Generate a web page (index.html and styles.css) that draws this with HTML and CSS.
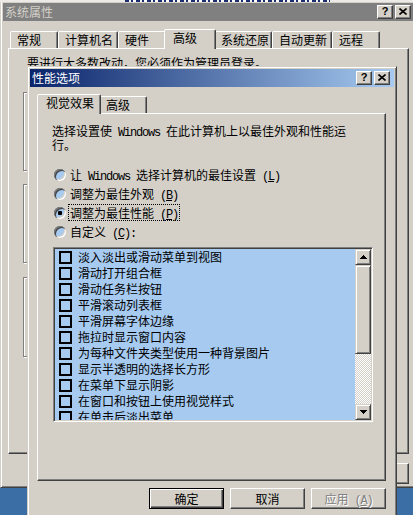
FILE: index.html
```html
<!DOCTYPE html>
<html lang="zh-CN">
<head>
<meta charset="utf-8">
<title>系统属性 - 性能选项</title>
<link rel="stylesheet" href="styles.css">
</head>
<body>
<div class="desktop">

  <div class="win win-back">
    <div class="titlebar titlebar-inactive">
      <span class="title">系统属性</span>
      <div class="caps">
        <span class="cap cap-help">?</span>
        <span class="cap"><svg width="8" height="7" viewBox="0 0 8 7"><path d="M0.5 0.5 L7.5 6.5 M7.5 0.5 L0.5 6.5" stroke="#000" stroke-width="1.6" fill="none"/></svg></span>
      </div>
    </div>
    <div class="body body-back">
      <div class="tabs">
        <div class="tab tab-2">常规</div>
        <div class="tab tab-4">计算机名</div>
        <div class="tab tab-2">硬件</div>
        <div class="tab tab-2 tab-sel tab-sel-2">高级</div>
        <div class="tab tab-4 tab-narrow">系统还原</div>
        <div class="tab tab-4">自动更新</div>
        <div class="tab tab-2">远程</div>
      </div>
      <div class="panel panel-back">
        <p class="note">要进行大多数改动，您必须作为管理员登录。</p>
        <div class="group group-1"></div>
        <div class="group group-2"></div>
        <div class="group group-3"></div>
      </div>
      <div class="btnrow">
        <button class="btn">确定</button>
        <button class="btn">取消</button>
        <button class="btn btn-disabled">应用<span class="mono"> (<u>A</u>)</span></button>
      </div>
    </div>
  </div>

  <div class="strip"><div class="strip-ink"></div></div>

  <div class="win win-front">
    <div class="titlebar titlebar-active">
      <span class="title">性能选项</span>
      <div class="caps">
        <span class="cap cap-help">?</span>
        <span class="cap"><svg width="8" height="7" viewBox="0 0 8 7"><path d="M0.5 0.5 L7.5 6.5 M7.5 0.5 L0.5 6.5" stroke="#000" stroke-width="1.6" fill="none"/></svg></span>
      </div>
    </div>
    <div class="body body-front">
      <div class="tabs">
        <div class="tab tab-4 tab-sel tab-sel-4">视觉效果</div>
        <div class="tab tab-2">高级</div>
      </div>
      <div class="panel panel-front">
        <p class="intro">选择设置使<span class="mono"> Windows </span>在此计算机上以最佳外观和性能运<br>行。</p>
        <div class="radios">
          <div class="radio-row"><span class="radio"></span><span class="rlabel">让<span class="mono"> Windows </span>选择计算机的最佳设置<span class="mono"> (<u>L</u>)</span></span></div>
          <div class="radio-row"><span class="radio"></span><span class="rlabel">调整为最佳外观<span class="mono"> (<u>B</u>)</span></span></div>
          <div class="radio-row"><span class="radio radio-on"></span><span class="rlabel rlabel-focus">调整为最佳性能<span class="mono"> (<u>P</u>)</span></span></div>
          <div class="radio-row"><span class="radio"></span><span class="rlabel">自定义<span class="mono"> (<u>C</u>):</span></span></div>
        </div>
        <div class="listbox">
          <div class="items">
            <div class="item"><span class="chk"></span>淡入淡出或滑动菜单到视图</div>
            <div class="item"><span class="chk"></span>滑动打开组合框</div>
            <div class="item"><span class="chk"></span>滑动任务栏按钮</div>
            <div class="item"><span class="chk"></span>平滑滚动列表框</div>
            <div class="item"><span class="chk"></span>平滑屏幕字体边缘</div>
            <div class="item"><span class="chk"></span>拖拉时显示窗口内容</div>
            <div class="item"><span class="chk"></span>为每种文件夹类型使用一种背景图片</div>
            <div class="item"><span class="chk"></span>显示半透明的选择长方形</div>
            <div class="item"><span class="chk"></span>在菜单下显示阴影</div>
            <div class="item"><span class="chk"></span>在窗口和按钮上使用视觉样式</div>
            <div class="item"><span class="chk"></span>在单击后淡出菜单</div>
          </div>
          <div class="sb">
            <div class="sb-btn"><svg width="7" height="4" viewBox="0 0 7 4" shape-rendering="crispEdges"><path d="M3 0h1v1h1v1h1v1h1v1H0V3h1V2h1V1h1z" fill="#000"/></svg></div>
            <div class="sb-thumb"></div>
            <div class="sb-track"></div>
            <div class="sb-btn"><svg width="7" height="4" viewBox="0 0 7 4" shape-rendering="crispEdges"><path d="M0 0h7v1H6v1H5v1H4v1H3V3H2V2H1V1H0z" fill="#000"/></svg></div>
          </div>
        </div>
      </div>
      <div class="btnrow">
        <button class="btn btn-default">确定</button>
        <button class="btn">取消</button>
        <button class="btn btn-disabled">应用<span class="mono"> (<u>A</u>)</span></button>
      </div>
    </div>
  </div>

</div>
</body>
</html>
```

FILE: styles.css
```css
* { box-sizing: border-box; }
html, body { margin: 0; padding: 0; }
body {
  background: #3a6ea5;
  font-family: "Noto Sans CJK SC", "Noto Sans", sans-serif;
  font-size: 12px;
  color: #000;
  overflow: hidden;
}
.desktop {
  position: relative;
  width: 413px;
  height: 515px;
  overflow: hidden;
}

/* windows */
.win {
  position: absolute;
  background: #d4d0c8;
  border: 1px solid;
  border-color: #d4d0c8 #404040 #404040 #d4d0c8;
  box-shadow: inset 1px 1px #fff, inset -1px -1px #808080;
  padding: 2px;
  display: flex;
  flex-direction: column;
}
.win-back { left: 0; top: 0; width: 418px; height: 488px; }
.win-front { left: 27px; top: 66px; width: 370px; height: 470px; }

.strip {
  position: absolute;
  left: 0; top: 0;
  width: 413px; height: 2px;
  background: #eceae6;
}
.strip-ink {
  margin-left: 125px;
  width: 205px;
  height: 2px;
  background: repeating-linear-gradient(90deg, #1c2c70 0 4px, #f4f4f4 4px 6px, #1c2c70 6px 8px, #fff 8px 11px);
}

.titlebar {
  height: 18px;
  flex: none;
  display: flex;
  align-items: center;
  padding: 0 4px 0 2px;
}
.titlebar-inactive { background: #808080; color: #d4d0c8; }
.titlebar-active { background: linear-gradient(90deg, #0a246a, #a6caf0); color: #fff; }
.title { flex: 1; line-height: 18px; white-space: nowrap; }
.caps { display: flex; gap: 2px; }
.cap {
  width: 16px; height: 14px;
  background: #d4d0c8;
  border: 1px solid;
  border-color: #fff #404040 #404040 #fff;
  box-shadow: inset -1px -1px #808080;
  display: flex; align-items: center; justify-content: center;
  padding-bottom: 1px;
}
.cap-help {
  font: bold 11px/11px "Liberation Sans", sans-serif;
  color: #000;
}

/* bodies */
.body { flex: 1; display: flex; flex-direction: column; }
.body-back { padding: 8px 0 0 5px; }
.body-front { padding: 7px 8px 0 7px; }

/* tabs */
.tabs {
  display: flex;
  align-items: flex-end;
  height: 19px;
  padding-left: 2px;
  flex: none;
}
.tab {
  height: 17px;
  background: #d4d0c8;
  border: 1px solid;
  border-bottom: 0;
  border-color: #fff #404040 transparent #fff;
  border-radius: 2px 2px 0 0;
  box-shadow: inset -1px 0 #808080;
  padding: 0 0 0 6px;
  line-height: 16px;
  white-space: nowrap;
  flex: none;
}
.tab-2 { width: 48px; }
.tab-4 { width: 60px; }
.tab-narrow { width: 58px; }
.tab-sel {
  height: 20px;
  margin: 0 -2px -1px;
  padding-left: 8px;
  position: relative;
  z-index: 2;
}
.tab-sel-2 { width: 52px; }
.tab-sel-4 { width: 64px; }

.panel {
  border: 1px solid;
  border-color: #fff #404040 #404040 #fff;
  box-shadow: inset -1px -1px #808080;
  flex: none;
}
.panel-back { width: 401px; height: 406px; padding: 7px 0 0 18px; }
.panel-front { height: 368px; padding: 10px 0 0 14px; }

/* back panel */
.note { margin: 0; line-height: 13px; white-space: nowrap; }
.group {
  width: 370px;
  height: 79px;
  margin-left: -4px;
  border: 1px solid #808080;
  box-shadow: inset 1px 1px #fff, 1px 1px #fff;
}
.group-1 { margin-top: 23px; }
.group-2 { margin-top: 13px; }
.group-3 { margin-top: 14px; height: 80px; }

/* front panel */
.mono {
  font-family: "Liberation Mono", monospace;
  letter-spacing: -1.2px;
  line-height: 0;
  white-space: pre;
}
.intro { margin: 0; line-height: 14px; white-space: nowrap; }
.radios { margin-top: 13px; }
.radio-row {
  height: 19px;
  display: flex;
  align-items: center;
  white-space: nowrap;
}
.radio {
  width: 12px; height: 12px;
  margin: 0 3px 0 2px;
  border-radius: 50%;
  background: #a6caf0;
  box-shadow: inset 1px 1px 0 #808080, inset 2px 2px 0 #404040, inset -1px -1px 0 #fff, inset -2px -2px 0 #d4d0c8;
  position: relative;
  flex: none;
}
.radio-on::after {
  content: "";
  position: absolute;
  left: 4px; top: 4px;
  width: 4px; height: 4px;
  border-radius: 1px;
  background: #000;
}
.rlabel { line-height: 15px; padding: 0 1px; }
.rlabel-focus { outline: 1px dotted #000; }

.listbox {
  margin: 6px 0 0 1px;
  width: 320px;
  height: 175px;
  padding: 1px;
  border: 1px solid;
  border-color: #808080 #fff #fff #808080;
  box-shadow: inset 1px 1px #404040, inset -1px -1px #d4d0c8;
  background: #a6caf0;
  display: flex;
}
.items { flex: 1; overflow: hidden; }
.item {
  height: 16px;
  display: flex;
  align-items: center;
  line-height: 16px;
  white-space: nowrap;
}
.chk {
  width: 13px; height: 13px;
  border: 2px solid #000;
  margin: 0 6px 0 4px;
  flex: none;
}
.sb { width: 16px; flex: none; display: flex; flex-direction: column; }
.sb-btn, .sb-thumb {
  background: #d4d0c8;
  border: 1px solid;
  border-color: #d4d0c8 #404040 #404040 #d4d0c8;
  box-shadow: inset 1px 1px #fff, inset -1px -1px #808080;
}
.sb-btn { height: 16px; display: flex; align-items: center; justify-content: center; flex: none; }
.sb-thumb { height: 89px; flex: none; }
.sb-track {
  flex: 1;
  background: repeating-conic-gradient(#fff 0 25%, #d4d0c8 0 50%) 0 0 / 2px 2px;
}

/* buttons */
.btnrow {
  display: flex;
  justify-content: flex-end;
  gap: 6px;
  flex: none;
}
.body-back .btnrow { width: 401px; margin-top: 9px; }
.body-front .btnrow { margin-top: 7px; }
.btn {
  width: 75px; height: 21px;
  margin: 0; padding: 0;
  background: #d4d0c8;
  border: 1px solid;
  border-color: #fff #404040 #404040 #fff;
  box-shadow: inset -1px -1px #808080;
  font-family: "Noto Sans CJK SC", "Noto Sans", sans-serif;
  font-size: 12px;
  line-height: 17px;
  color: #000;
  white-space: nowrap;
}
.btn-default {
  border-color: #000;
  box-shadow: inset 1px 1px #fff, inset -1px -1px #404040, inset -2px -2px #808080;
}
.btn-disabled { color: #808080; text-shadow: 1px 1px #fff; }
```
